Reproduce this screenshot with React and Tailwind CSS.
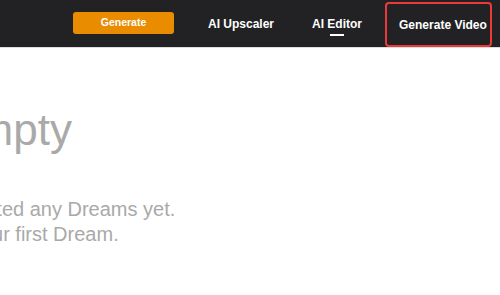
const font = { fontFamily: '"Liberation Sans", Arial, sans-serif' }

const App = () => {
  return (
    <div className="w-[500px] h-[295px] overflow-hidden bg-white" style={font}>
      <header className="h-[48px] bg-[#222225] border-b border-[#dcdcdc] flex items-center">
        <button className="ml-[73px] w-[101px] h-[22px] rounded-[3px] bg-[#e98c00] text-white text-[10.5px] font-bold mt-[-2px]">
          Generate
        </button>
        <a className="ml-[34px] text-white text-[12px] font-bold">AI Upscaler</a>
        <a className="relative ml-[38px] text-white text-[12px] font-bold">
          AI Editor
          <span className="absolute left-[18px] top-[19px] w-[14px] h-[2px] bg-white" />
        </a>
        <a className="ml-[23px] self-end h-[45px] w-[107px] rounded-[4px] border-2 border-[#ec3a3a] pl-[12px] flex items-center text-white text-[12px] font-bold">
          Generate Video
        </a>
      </header>

      <main className="w-[400px] -ml-[188px] flex flex-col items-center text-[#a9a9a9]">
        <h1 className="mt-[60px] mr-[72px] text-[44px] leading-none">It's Empty</h1>
        <p className="mt-[45px] text-[20px] leading-[25px] text-center">
          You haven't created any Dreams yet.
          <br />
          Create your first Dream.
        </p>
      </main>
    </div>
  )
}

export default App
